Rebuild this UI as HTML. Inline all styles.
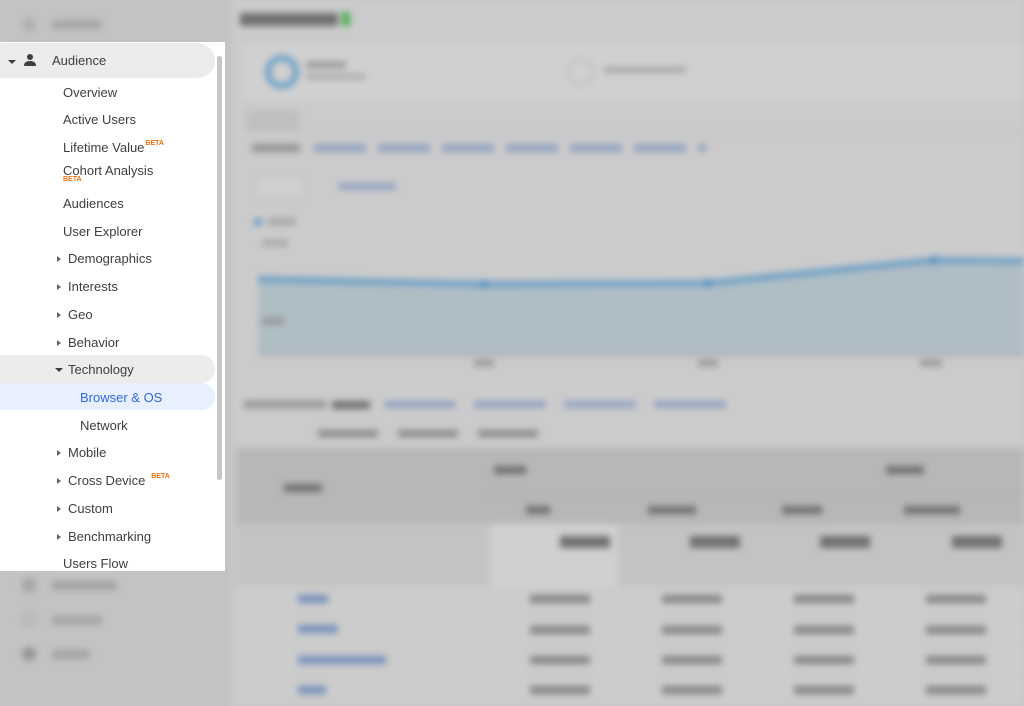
<!DOCTYPE html>
<html style="overflow:hidden"><head><meta charset="utf-8"><style>
*{margin:0;padding:0;box-sizing:border-box}
body{width:1024px;height:706px;overflow:hidden;background:#c6c6c6;font-family:"Liberation Sans",sans-serif;position:relative}
.bg{position:absolute;left:0;top:0;width:1024px;height:706px;filter:blur(3.5px);overflow:hidden}
.a{position:absolute}
.panel{position:absolute;left:0;top:42px;width:225px;height:529px;background:#fff;overflow:hidden;font-size:13px;color:#3c4043}
.it{position:absolute;left:0;white-space:nowrap}
.beta{color:#e8710a;font-size:7px;font-weight:bold;position:relative;top:-7px;margin-left:1px}
.tri{display:inline-block;width:0;height:0;border-top:3px solid transparent;border-bottom:3px solid transparent;border-left:4px solid #5f6368;margin-right:7px;vertical-align:1px}
.td{display:inline-block;width:0;height:0;border-left:4px solid transparent;border-right:4px solid transparent;border-top:4px solid #3c4043;margin-right:5px;vertical-align:2px}
</style></head><body>
<div class="bg">
<div class="a" style="left:-10px;top:-10px;width:242px;height:726px;background:#c3c3c3"></div>
<div class="a" style="left:232px;top:-10px;width:802px;height:726px;background:#cbcbcb"></div>
<div class="a" style="left:22px;top:18px;width:14px;height:14px;border-radius:50%;background:#b0b0b0"></div>
<div class="a" style="left:52px;top:20px;width:50px;height:9px;background:#a6a6a6"></div>
<div class="a" style="left:22px;top:578px;width:14px;height:14px;background:#a6a6a6;border-radius:3px"></div>
<div class="a" style="left:52px;top:581px;width:65px;height:9px;background:#a2a2a2"></div>
<div class="a" style="left:22px;top:612px;width:14px;height:14px;border:2px solid #a6a6a6;border-radius:50%"></div>
<div class="a" style="left:52px;top:616px;width:50px;height:9px;background:#a6a6a6"></div>
<div class="a" style="left:22px;top:647px;width:14px;height:14px;background:#949494;border-radius:50%"></div>
<div class="a" style="left:52px;top:650px;width:38px;height:9px;background:#a4a4a4"></div>
<div class="a" style="left:240px;top:13px;width:98px;height:13px;background:#707070"></div>
<div class="a" style="left:342px;top:12px;width:8px;height:14px;background:#4caf50"></div>
<div class="a" style="left:240px;top:42px;width:794px;height:60px;background:#d0d0d0;border:1px solid #c4c4c4"></div>
<div class="a" style="left:265px;top:55px;width:34px;height:34px;border:6px solid #6ba0c8;border-radius:50%"></div>
<div class="a" style="left:306px;top:62px;width:40px;height:6px;background:#949494"></div>
<div class="a" style="left:306px;top:74px;width:60px;height:5px;background:#a8a8a8"></div>
<div class="a" style="left:568px;top:58px;width:26px;height:28px;border:2px solid #b8b8b8;border-radius:50%"></div>
<div class="a" style="left:604px;top:67px;width:82px;height:6px;background:#a8a8a8"></div>
<div class="a" style="left:246px;top:110px;width:54px;height:20px;background:#c0c0c0"></div>
<div class="a" style="left:246px;top:131px;width:788px;height:1px;background:#b8b8b8"></div>
<div class="a" style="left:252px;top:144px;width:48px;height:8px;background:#949494"></div>
<div class="a" style="left:314px;top:144px;width:392px;height:8px;background:repeating-linear-gradient(90deg,#95a4c2 0 52px,transparent 52px 64px)"></div>
<div class="a" style="left:254px;top:176px;width:52px;height:22px;border:1px solid #b8b8b8;background:#d0d0d0"></div>
<div class="a" style="left:338px;top:183px;width:58px;height:7px;background:#95a4c2"></div>
<div class="a" style="left:254px;top:218px;width:8px;height:8px;border-radius:50%;background:#5b97c8"></div>
<div class="a" style="left:268px;top:218px;width:28px;height:7px;background:#a6a6a6"></div>
<div class="a" style="left:262px;top:240px;width:26px;height:6px;background:#a6a6a6"></div>
<svg class="a" style="left:258px;top:250px" width="776" height="110"><polygon points="0,29 226,34 450,33 676,10 776,11 776,105 0,105" fill="#afbdc5"/><polyline points="0,29 226,34 450,33 676,10 776,11" fill="none" stroke="#5f9ac6" stroke-width="5"/><circle cx="226" cy="34" r="4" fill="#4a8ac0"/><circle cx="450" cy="33" r="4" fill="#4a8ac0"/><circle cx="676" cy="10" r="4" fill="#4a8ac0"/><rect x="0" y="103" width="776" height="3" fill="#a8b1b3"/></svg>
<div class="a" style="left:262px;top:318px;width:22px;height:6px;background:#949494"></div>
<div class="a" style="left:474px;top:360px;width:20px;height:6px;background:#949494"></div>
<div class="a" style="left:698px;top:360px;width:20px;height:6px;background:#949494"></div>
<div class="a" style="left:920px;top:360px;width:22px;height:6px;background:#949494"></div>
<div class="a" style="left:244px;top:401px;width:82px;height:7px;background:#949494"></div>
<div class="a" style="left:332px;top:401px;width:38px;height:8px;background:#707070"></div>
<div class="a" style="left:384px;top:401px;width:356px;height:7px;background:repeating-linear-gradient(90deg,#95a4c2 0 72px,transparent 72px 90px)"></div>
<div class="a" style="left:318px;top:430px;width:224px;height:7px;background:repeating-linear-gradient(90deg,#8a8a8a 0 60px,transparent 60px 80px)"></div>
<div class="a" style="left:236px;top:448px;width:798px;height:76px;background:#b7b7b7"></div>
<div class="a" style="left:284px;top:484px;width:38px;height:8px;background:#707070"></div>
<div class="a" style="left:494px;top:466px;width:32px;height:8px;background:#707070"></div>
<div class="a" style="left:886px;top:466px;width:38px;height:8px;background:#707070"></div>
<div class="a" style="left:488px;top:494px;width:546px;height:1px;background:#a8a8a8"></div>
<div class="a" style="left:526px;top:506px;width:24px;height:8px;background:#707070"></div>
<div class="a" style="left:648px;top:506px;width:48px;height:8px;background:#707070"></div>
<div class="a" style="left:782px;top:506px;width:40px;height:8px;background:#707070"></div>
<div class="a" style="left:904px;top:506px;width:56px;height:8px;background:#707070"></div>
<div class="a" style="left:236px;top:524px;width:798px;height:62px;background:#c3c3c3"></div>
<div class="a" style="left:490px;top:524px;width:128px;height:62px;background:#d0d0d0"></div>
<div class="a" style="left:560px;top:536px;width:50px;height:12px;background:#707070"></div>
<div class="a" style="left:690px;top:536px;width:50px;height:12px;background:#707070"></div>
<div class="a" style="left:820px;top:536px;width:50px;height:12px;background:#707070"></div>
<div class="a" style="left:952px;top:536px;width:50px;height:12px;background:#707070"></div>
<div class="a" style="left:236px;top:586px;width:798px;height:130px;background:repeating-linear-gradient(180deg,#cccccc 0 29px,#c0c0c0 29px 30px)"></div>
<div class="a" style="left:298px;top:595px;width:30px;height:8px;background:#7690ba"></div>
<div class="a" style="left:298px;top:625px;width:40px;height:8px;background:#7690ba"></div>
<div class="a" style="left:298px;top:656px;width:88px;height:8px;background:#7690ba"></div>
<div class="a" style="left:298px;top:686px;width:28px;height:8px;background:#7690ba"></div>
<div class="a" style="left:530px;top:595px;width:480px;height:8px;background:repeating-linear-gradient(90deg,#858585 0 60px,transparent 60px 132px)"></div>
<div class="a" style="left:530px;top:626px;width:480px;height:8px;background:repeating-linear-gradient(90deg,#858585 0 60px,transparent 60px 132px)"></div>
<div class="a" style="left:530px;top:656px;width:480px;height:8px;background:repeating-linear-gradient(90deg,#858585 0 60px,transparent 60px 132px)"></div>
<div class="a" style="left:530px;top:686px;width:480px;height:8px;background:repeating-linear-gradient(90deg,#858585 0 60px,transparent 60px 132px)"></div>
</div>
<div class="panel">
<div class="a" style="left:0;top:1px;width:215px;height:35px;background:#ececec;border-radius:0 18px 18px 0"></div>
<div class="a" style="left:0;top:313px;width:215px;height:28px;background:#ececec;border-radius:0 14px 14px 0"></div>
<div class="a" style="left:0;top:341px;width:215px;height:27px;background:#e8f0fe;border-radius:0 14px 14px 0"></div>
<div class="a" style="left:217px;top:14px;width:5px;height:424px;background:#c6c6c6;border-radius:3px"></div>
<div class="it" style="left:8px;top:12px"><span class="td"></span></div>
<svg class="a" style="left:23px;top:11px" width="14" height="14"><circle cx="7" cy="4" r="3" fill="#3c4043"/><path d="M1 13 Q1 8 7 8 Q13 8 13 13Z" fill="#3c4043"/></svg>
<div class="it" style="left:52px;top:11px">Audience</div>
<div class="it" style="left:63px;top:43px">Overview</div>
<div class="it" style="left:63px;top:70px">Active Users</div>
<div class="it" style="left:63px;top:98px">Lifetime Value<span class="beta">BETA</span></div>
<div class="it" style="left:63px;top:121px">Cohort Analysis</div>
<div class="it" style="left:63px;top:134px;color:#e8710a;font-size:7px;font-weight:bold">BETA</div>
<div class="it" style="left:63px;top:154px">Audiences</div>
<div class="it" style="left:63px;top:182px">User Explorer</div>
<div class="it" style="left:57px;top:209px"><span class="tri"></span>Demographics</div>
<div class="it" style="left:57px;top:237px"><span class="tri"></span>Interests</div>
<div class="it" style="left:57px;top:265px"><span class="tri"></span>Geo</div>
<div class="it" style="left:57px;top:293px"><span class="tri"></span>Behavior</div>
<div class="it" style="left:55px;top:320px"><span class="td"></span>Technology</div>
<div class="it" style="left:80px;top:348px;color:#3367d6">Browser &amp; OS</div>
<div class="it" style="left:80px;top:376px">Network</div>
<div class="it" style="left:57px;top:403px"><span class="tri"></span>Mobile</div>
<div class="it" style="left:57px;top:431px"><span class="tri"></span>Cross Device<span class="beta" style="margin-left:6px">BETA</span></div>
<div class="it" style="left:57px;top:459px"><span class="tri"></span>Custom</div>
<div class="it" style="left:57px;top:487px"><span class="tri"></span>Benchmarking</div>
<div class="it" style="left:63px;top:514px">Users Flow</div>
</div>
</body></html>
